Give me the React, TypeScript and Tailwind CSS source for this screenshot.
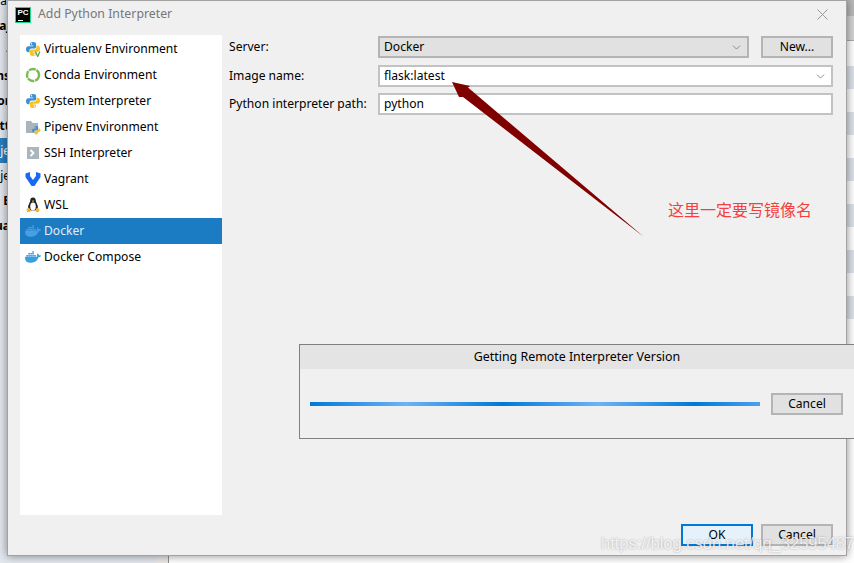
import React from 'react';
import { ChevronDown } from 'lucide-react';
import { SiDocker } from 'react-icons/si';

const uiFont = "font-['Noto_Sans','Open_Sans',sans-serif]";

const PythonLogo = () => (
  <g>
    <path d="M8 1C5.600 1 5 2 5 3v1.600h3.200v.7H3.300C2 5.300 1 6.400 1 8.200s1 3 2.200 3h1.300V9.400c0-1.100.9-2 2-2h3.200c.8 0 1.400-.6 1.400-1.400V3c0-1.100-1-2-3.100-2z" fill="#3c8fd0" />
    <path d="M8 15c2.400 0 3-1 3-2v-1.600H7.800v-.7h4.900c1.300 0 2.300-1.100 2.300-2.900s-1-3-2.200-3h-1.300v1.800c0 1.100-.9 2-2 2H6.300c-.8 0-1.400.6-1.400 1.400v3c0 1.100 1 2 3.100 2z" fill="#f7c325" />
    <circle cx="6.500" cy="2.800" r=".7" fill="#fff" />
    <circle cx="9.500" cy="13.200" r=".7" fill="#fff" />
  </g>
);

const VirtualenvIcon = () => (
  <svg viewBox="0 0 16 16" className="h-4 w-4">
    <PythonLogo />
    <path d="M10.500 10.500l2.200 5 2.200-5" fill="none" stroke="#5aa84a" strokeWidth="1.300" />
  </svg>
);

const CondaIcon = () => (
  <svg viewBox="0 0 16 16" className="h-4 w-4">
    <circle cx="8" cy="8" r="6" fill="none" stroke="#7dbb55" strokeWidth="2.400" strokeDasharray="7 .8" />
  </svg>
);

const PythonIcon = () => (
  <svg viewBox="0 0 16 16" className="h-4 w-4">
    <PythonLogo />
  </svg>
);

const PipenvIcon = () => (
  <svg viewBox="0 0 16 16" className="h-4 w-4">
    <path d="M1 2h5l1.500 2H13v10H1z" fill="#a9b4bd" />
    <g transform="translate(6.500 6.500) scale(.6)">
      <PythonLogo />
    </g>
  </svg>
);

const SshIcon = () => (
  <svg viewBox="0 0 16 16" className="h-4 w-4">
    <rect x="2" y="2" width="12" height="12" fill="#aab5bd" />
    <path d="M5.500 5l3 3-3 3" fill="none" stroke="#fff" strokeWidth="1.800" />
  </svg>
);

const VagrantIcon = () => (
  <svg viewBox="0 0 16 16" className="h-4 w-4">
    <path d="M.5 2.500L5 1v4l3 4 3-4V1l4.500 1.500V6l-6 9h-3l-6-9z" fill="#1868f2" />
  </svg>
);

const TuxIcon = () => (
  <svg viewBox="0 0 16 16" className="h-4 w-4">
    <path d="M8 .5c-2 0-2.800 1.500-2.800 3.300 0 1.500-2.200 4-2.200 6.700 0 1.500 1 3 5 3s5-1.500 5-3c0-2.700-2.200-5.200-2.200-6.700C10.800 2 10 .5 8 .5z" fill="#222" />
    <ellipse cx="8" cy="9.500" rx="2.800" ry="4" fill="#fff" />
    <path d="M6.800 4l1.200-.7 1.200.7L8 5z" fill="#f2b632" />
    <path d="M1.500 12l2.500-1.500 2 3.500-1.500 1H2zM14.500 12L12 10.500 10 14l1.500 1H14z" fill="#f2b632" />
  </svg>
);

const items = [
  { name: 'Virtualenv Environment', icon: <VirtualenvIcon /> },
  { name: 'Conda Environment', icon: <CondaIcon /> },
  { name: 'System Interpreter', icon: <PythonIcon /> },
  { name: 'Pipenv Environment', icon: <PipenvIcon /> },
  { name: 'SSH Interpreter', icon: <SshIcon /> },
  { name: 'Vagrant', icon: <VagrantIcon /> },
  { name: 'WSL', icon: <TuxIcon /> },
  { name: 'Docker', icon: <SiDocker className="h-4 w-4 text-[#4a9fe2]" />, selected: true },
  { name: 'Docker Compose', icon: <SiDocker className="h-4 w-4 text-[#389fe0]" /> },
];

const peekRows = [
  { text: 'al', bold: false },
  { text: 'aj', bold: true },
  { text: '-', bold: true },
  { text: 'ns', bold: true },
  { text: 'or', bold: true },
  { text: 'tt', bold: true },
  { text: 'je', active: true },
  { text: 'je' },
  { text: 'E', bold: true },
  { text: 'ua', bold: true },
];

const tableRows = [66, 113, 159, 205, 251, 297];

const Button = ({ label, primary }: { label: string; primary?: boolean }) => (
  <div
    className={
      'flex h-[22px] w-[72px] items-center justify-center border-2 text-[12.100px] text-black ' +
      (primary ? 'border-[#0078d7] bg-[#e5f1fb]' : 'border-[#b4b4b4] bg-[#e1e1e1]')
    }
  >
    {label}
  </div>
);

const Field = ({ value, grey, chevron }: { value: string; grey?: boolean; chevron?: boolean }) => (
  <div
    className={
      'flex h-[22px] flex-1 items-center justify-between border-2 pl-1 pr-1 text-[12.100px] text-black ' +
      (grey ? 'border-[#b4b4b4] bg-[#e1e1e1]' : 'border-[#c2c2c2] bg-white')
    }
  >
    <span>{value}</span>
    {chevron && <ChevronDown className="h-[13px] w-[13px] text-[#777]" strokeWidth={1.500} />}
  </div>
);

export default function App() {
  return (
    <div className={'relative h-[563px] w-[854px] overflow-hidden bg-white ' + uiFont}>
      {/* Window behind the dialog */}
      <div className="flex h-full">
        <div className="-mt-[12px] w-[156px] overflow-hidden bg-[#e3e8ee]">
          {peekRows.map((row, i) => (
            <div
              key={i}
              className={
                'flex h-[25px] w-[10px] items-center justify-end overflow-hidden whitespace-nowrap text-[12px] text-black ' +
                (row.bold ? 'font-bold ' : '') +
                (row.active ? 'bg-[#2a7fbe] text-white' : '')
              }
            >
              {row.text}
            </div>
          ))}
        </div>
        <div className="w-[13px] border-r border-[#909090] bg-[#ece8e8]" />
        <div className="flex flex-1 flex-col">
          <div className="h-[16px] bg-[#b9b9b9]" />
          <div className="h-[25px] border-b border-[#a8a8a8] bg-[#d4d4d4]" />
          <div className="flex flex-col gap-[23px] pt-[25px]">
            {tableRows.map((y) => (
              <div key={y} className="h-[23px] bg-[#dde2e9]" />
            ))}
          </div>
        </div>
      </div>

      {/* Add Python Interpreter dialog */}
      <div className="absolute left-[7px] top-0 flex h-[556px] w-[840px] flex-col border border-[#a2a2a2] bg-[#f0f0f0] shadow-[0_0_9px_rgba(0,0,0,0.45)]">
        <div className="flex h-[34px] items-center pb-[7px] pl-[7px] pr-[18px]">
          <div className="relative flex h-4 w-4 items-start justify-center border border-[#21d789] bg-black font-['Liberation_Sans',sans-serif] text-[8px] font-bold leading-[10px] text-white">
            PC
            <div className="absolute bottom-[1px] left-[2px] h-px w-[5px] bg-white" />
          </div>
          <span className="ml-[7px] text-[12.300px] text-[#777]">Add Python Interpreter</span>
          <svg viewBox="0 0 11 11" className="ml-auto h-[11px] w-[11px]">
            <path d="M.5.5l10 10M10.500.5l-10 10" stroke="#999" fill="none" />
          </svg>
        </div>

        <div className="flex flex-1 pl-[12px] pr-[13px]">
          <div className="h-[480px] w-[202px] bg-white pt-px">
            {items.map((item) => (
              <div
                key={item.name}
                className={
                  'flex h-[26px] items-center gap-[3px] pl-[5px] text-[12.100px] ' +
                  (item.selected ? 'bg-[#1b7bc3] text-[#e4eef6]' : 'text-black')
                }
              >
                {item.icon}
                <span>{item.name}</span>
              </div>
            ))}
          </div>

          <div className="flex flex-1 flex-col pl-[7px] pt-px text-[12.100px] text-black">
            <div className="flex items-center">
              <div className="w-[149px]">Server:</div>
              <Field value="Docker" grey chevron />
              <div className="ml-3">
                <Button label="New..." />
              </div>
            </div>
            <div className="mt-[7px] flex items-center">
              <div className="w-[149px]">Image name:</div>
              <Field value="flask:latest" chevron />
            </div>
            <div className="mt-[6px] flex items-center">
              <div className="w-[149px]">Python interpreter path:</div>
              <Field value="python" />
            </div>
          </div>
        </div>

        <div className="flex justify-end gap-2 pb-[9px] pr-[13px]">
          <Button label="OK" primary />
          <Button label="Cancel" />
        </div>
      </div>

      {/* Progress popup */}
      <div className="absolute -right-[1px] left-[299px] top-[344px] h-[95px] border border-[#808080] bg-[#f0f0f0]">
        <div className="flex h-[24px] items-center justify-center bg-[#e4e4e4] text-[12.400px] text-black">
          Getting Remote Interpreter Version
        </div>
        <div className="flex items-center pl-[10px] pt-[24px]">
          <div className="h-1 w-[450px] bg-[linear-gradient(90deg,#0078d7,#6db3f5_50%,#0078d7)] bg-[length:192px_4px]" />
          <div className="ml-[11px]">
            <Button label="Cancel" />
          </div>
        </div>
      </div>

      {/* Annotation arrow */}
      <svg viewBox="0 0 854 563" className="absolute left-0 top-0 h-[563px] w-[854px]">
        <path d="M452 82L470 86 468 87.500 644 237 463 97 459 97z" fill="#800000" />
      </svg>
      <div className="absolute left-[668px] top-[199px] font-['Noto_Sans_CJK_SC',sans-serif] text-base leading-[20px] text-[#f43f3f]">
        这里一定要写镜像名
      </div>

      {/* Watermark */}
      <div className="absolute left-[601px] top-[533px] whitespace-nowrap font-['Liberation_Sans',sans-serif] text-[16.500px] leading-[20px] text-white/80 [text-shadow:0_0_2px_rgba(0,0,0,0.35)]">
        https://blog.csdn.net/qq_32595487
      </div>
    </div>
  );
}
